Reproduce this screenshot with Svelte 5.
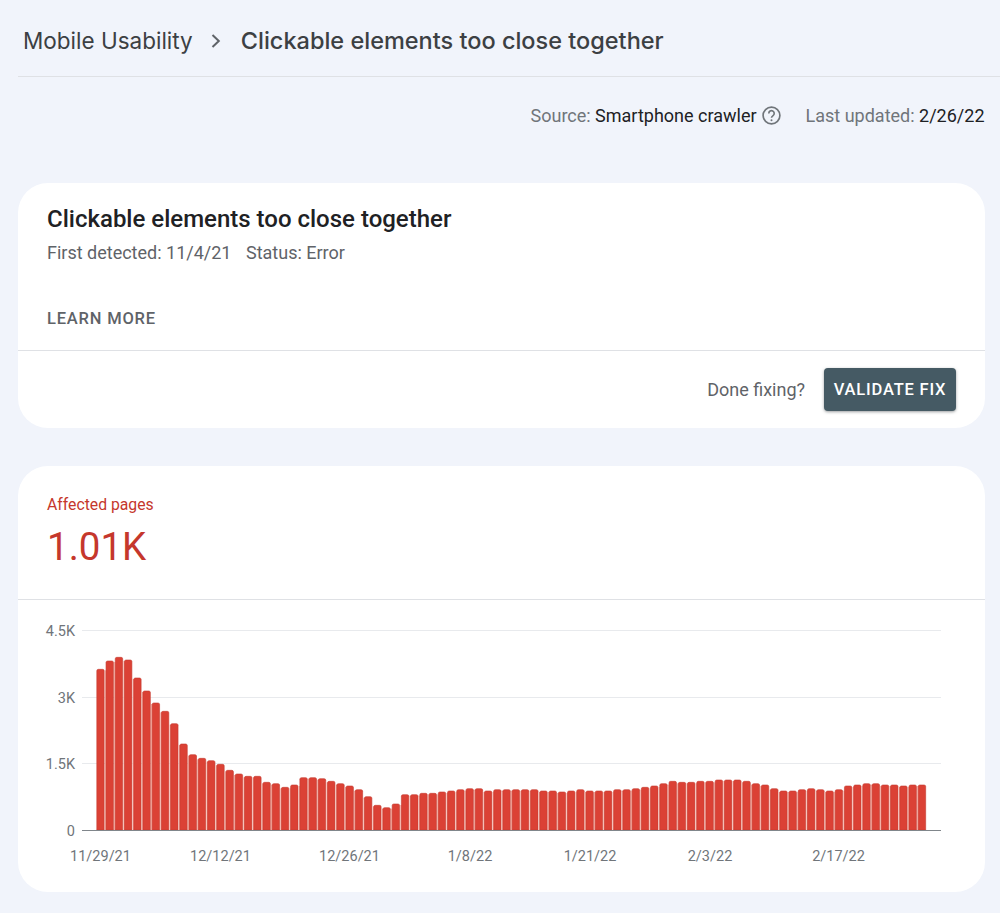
<script lang="ts">
	// bar heights in px, read off the reference chart
	const tops = [
		208, 183, 172, 180, 234, 273, 309, 334, 371, 432, 464, 475, 482, 493, 511, 522, 529, 529, 547, 551,
		562, 555, 533, 533, 536, 544, 551, 558, 569, 590, 616, 623, 612, 584, 584, 580, 580, 576, 573, 569,
		566, 566, 573, 569, 569, 569, 569, 569, 573, 573, 576, 573, 569, 573, 573, 573, 569, 569, 566, 562,
		558, 551, 544, 547, 547, 544, 544, 540, 540, 540, 544, 551, 555, 566, 573, 573, 569, 566, 569, 573,
		569, 558, 555, 551, 551, 555, 555, 558, 555, 555
	];
	const bars = tops.map((t) => (690 - t) / 3);

	const yTicks = [
		{ label: '4.5K', y: 14.5 },
		{ label: '3K', y: 81.5 },
		{ label: '1.5K', y: 147.5 }
	];
	const xTicks = [
		{ label: '11/29/21', x: 82.5 },
		{ label: '12/12/21', x: 202.5 },
		{ label: '12/26/21', x: 331.5 },
		{ label: '1/8/22', x: 452 },
		{ label: '1/21/22', x: 572 },
		{ label: '2/3/22', x: 692 },
		{ label: '2/17/22', x: 820.5 }
	];
</script>

<div class="page">
	<header class="crumbs">
		<span class="crumb">Mobile Usability</span>
		<svg class="chevron" viewBox="0 0 12 16" width="12" height="16" aria-hidden="true">
			<path d="M2.5 2 L8.8 8 L2.5 14" fill="none" stroke="#5f6368" stroke-width="2" />
		</svg>
		<span class="crumb current">Clickable elements too close together</span>
	</header>

	<div class="meta">
		<span>Source: <b>Smartphone crawler</b></span>
		<svg class="help" viewBox="0 0 24 24" width="21" height="21" aria-hidden="true">
			<circle cx="12" cy="12" r="9.6" fill="none" stroke="#70757a" stroke-width="1.9" />
			<path d="M8.9 9.6a3.1 3.1 0 1 1 4.9 2.5c-1.1.8-1.8 1.4-1.8 2.6" fill="none" stroke="#70757a" stroke-width="1.9" />
			<circle cx="12" cy="17.3" r="1.15" fill="#70757a" />
		</svg>
		<span class="updated">Last updated: <b>2/26/22</b></span>
	</div>

	<section class="card issue">
		<div class="issue-body">
			<h1>Clickable elements too close together</h1>
			<p class="detected"><span>First detected: 11/4/21</span><span>Status: Error</span></p>
			<a class="learn" href="#learn">LEARN MORE</a>
		</div>
		<div class="issue-foot">
			<span class="done">Done fixing?</span>
			<button type="button" class="validate">VALIDATE FIX</button>
		</div>
	</section>

	<section class="card affected">
		<div class="summary">
			<div class="summary-label">Affected pages</div>
			<div class="summary-value">1.01K</div>
		</div>
		<div class="chart">
			<svg viewBox="0 0 967 262" width="967" height="262" role="img" aria-label="Affected pages over time">
				{#each yTicks as t}
					<line x1="64" x2="923" y1={t.y} y2={t.y} stroke="#e8eaed" />
					<text x="57" y={t.y + 5.5} text-anchor="end" class="tick">{t.label}</text>
				{/each}
				<text x="57" y="219.5" text-anchor="end" class="tick">0</text>
				{#each bars as h, i}
					{#if i > 0}
						<rect x={77.6 + i * 9.23} y={214 - Math.min(h, bars[i - 1]) + 1} width="1.8" height={Math.min(h, bars[i - 1]) - 1} fill="#f7b3a9" />
					{/if}
					<path
						d="M{78.8 + i * 9.23} 214 v{-(h - 1.5)} q0 -1.5 1.5 -1.5 h4.4 q1.5 0 1.5 1.5 v{h - 1.5} z"
						fill="#db4135"
						stroke="#c53b2f"
						stroke-width="0.6"
					/>
				{/each}
				<line x1="64" x2="923" y1="214.5" y2="214.5" stroke="#80868b" />
				{#each xTicks as t}
					<text x={t.x} y="245" text-anchor="middle" class="tick">{t.label}</text>
				{/each}
			</svg>
		</div>
	</section>
</div>

<style>
	:global(body) {
		margin: 0;
		background: #f1f4fb;
	}
	.page {
		height: 913px;
		box-sizing: border-box;
		padding-left: 18px;
		overflow: hidden;
		font-family: Roboto, sans-serif;
		color: #5f6368;
	}
	.crumbs {
		display: flex;
		align-items: center;
		height: 76px;
		padding-left: 5px;
		border-bottom: 1px solid #dfe1e5;
		font-family: Inter, sans-serif;
		font-size: 22.5px;
		color: #3c4043;
		white-space: nowrap;
	}
	.crumb {
		padding-top: 4px;
	}
	.chevron {
		margin: 5px 19px 0 17px;
	}
	.current {
		font-size: 23.5px;
		font-weight: 500;
	}
	.meta {
		display: flex;
		align-items: center;
		justify-content: flex-end;
		height: 20px;
		margin: 28px 15.5px 0 0;
		font-size: 18px;
		color: #70757a;
		white-space: nowrap;
	}
	.meta b {
		font-weight: 400;
		color: #202124;
	}
	.help {
		margin-left: 4px;
	}
	.updated {
		margin-left: 24px;
	}
	.card {
		width: 967px;
		background: #fff;
		border-radius: 30px;
		overflow: hidden;
	}
	.issue {
		margin-top: 58px;
		height: 245px;
		display: flex;
		flex-direction: column;
	}
	.issue-body {
		height: 168px;
		box-sizing: border-box;
		padding: 22px 29px 0;
		border-bottom: 1px solid #dfe1e5;
	}
	h1 {
		margin: 0;
		font-size: 24px;
		line-height: 28px;
		font-weight: 500;
		color: #202124;
	}
	.detected {
		display: flex;
		gap: 14.5px;
		margin: 9px 0 0;
		font-size: 18px;
		line-height: 22px;
	}
	.learn {
		display: block;
		margin-top: 45px;
		font-size: 16.5px;
		line-height: 20px;
		font-weight: 500;
		letter-spacing: 0.8px;
		color: #5f6368;
		text-decoration: none;
	}
	.issue-foot {
		flex: 1;
		display: flex;
		align-items: center;
		justify-content: flex-end;
		gap: 19px;
		padding-right: 29px;
	}
	.done {
		font-size: 18px;
	}
	.validate {
		width: 132px;
		height: 43px;
		padding: 0;
		border: 0;
		border-radius: 4px;
		background: #455a64;
		box-shadow: 0 1px 3px rgba(60, 64, 67, 0.5);
		color: #fff;
		font: 500 16.5px Roboto, sans-serif;
		letter-spacing: 0.8px;
	}
	.affected {
		margin-top: 38px;
		height: 426px;
	}
	.summary {
		height: 134px;
		box-sizing: border-box;
		padding: 30px 29px 0;
		border-bottom: 1px solid #dfe1e5;
		color: #c5372c;
	}
	.summary-label {
		font-size: 15.75px;
		line-height: 18px;
	}
	.summary-value {
		margin-top: 10px;
		font-size: 38.5px;
		line-height: 46px;
	}
	.chart {
		margin-top: 16px;
	}
	.chart svg {
		display: block;
	}
	.tick {
		font-family: Roboto, sans-serif;
		font-size: 14.5px;
		fill: #70757a;
	}
</style>
